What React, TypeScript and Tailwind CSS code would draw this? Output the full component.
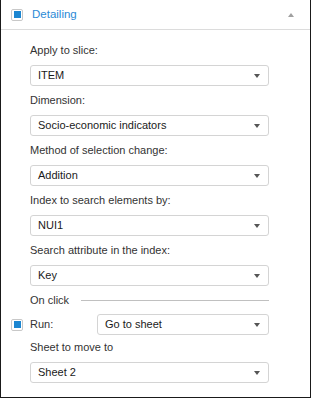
import React from 'react'

const Check = () => (
    <div className='w-[12px] h-[12px] border border-[#c8c8c8] rounded-[2px] bg-white flex items-center justify-center'>
        <div className='w-[7px] h-[7px] bg-[#1c86d1]' />
    </div>
)

const Select = ({ value, className = '' }: { value: string; className?: string }) => (
    <div className={'h-[21px] border border-[#d4d4d4] rounded-[3px] bg-white flex items-center justify-between pl-[7px] pr-[8px] ' + className}>
        <span className='text-[#1a1a1a]'>{value}</span>
        <svg width='6' height='4' viewBox='0 0 6 4'>
            <path d='M0 0H6L3 4Z' fill='#555' />
        </svg>
    </div>
)

const Field = ({ label, value }: { label: string; value: string }) => (
    <div className='flex flex-col'>
        <div className='h-[15px] leading-[15px] mb-[7px] text-[#333]'>{label}</div>
        <Select value={value} className='w-[239px] mb-[7px]' />
    </div>
)

const App = () => {
    return (
        <main className='w-[312px] h-[400px] bg-white text-[11px] font-["Liberation_Sans",sans-serif]'>
            <div className='w-[311px] h-[398px] border-l border-r border-b border-[#1a1a1a] flex flex-col'>
                <div className='h-[30px] border-b border-[#dcdcdc] flex items-center pl-[10px] pr-[16px]'>
                    <Check />
                    <span className='ml-[9px] text-[11.5px] text-[#2c8ad6]'>Detailing</span>
                    <svg className='ml-auto' width='6' height='4' viewBox='0 0 6 4'>
                        <path d='M3 0L6 4H0Z' fill='#a0a0a0' />
                    </svg>
                </div>
                <div className='pl-[29px] pt-[13px] flex flex-col'>
                    <Field label='Apply to slice:' value='ITEM' />
                    <Field label='Dimension:' value='Socio-economic indicators' />
                    <Field label='Method of selection change:' value='Addition' />
                    <Field label='Index to search elements by:' value='NUI1' />
                    <Field label='Search attribute in the index:' value='Key' />
                    <div className='h-[15px] w-[239px] flex items-center mb-[6px]'>
                        <span className='text-[#333]'>On click</span>
                        <div className='flex-1 ml-[12px] h-px bg-[#c0c0c0]' />
                    </div>
                    <div className='flex items-center -ml-[19px] mb-[5px]'>
                        <Check />
                        <span className='ml-[7px] w-[67px] text-[#333]'>Run:</span>
                        <Select value='Go to sheet' className='w-[172px]' />
                    </div>
                    <Field label='Sheet to move to' value='Sheet 2' />
                </div>
            </div>
        </main>
    )
}

export default App
